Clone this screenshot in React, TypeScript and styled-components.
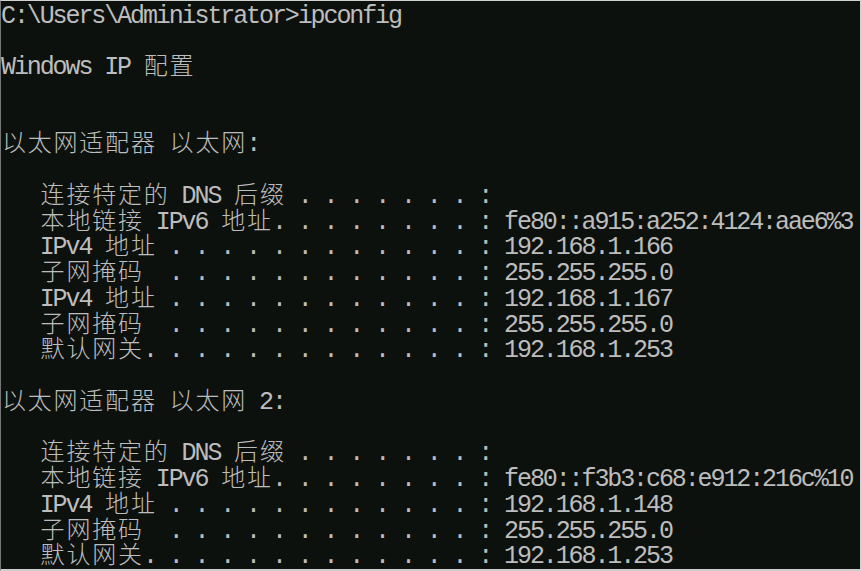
import React from "react";
import styled, { createGlobalStyle } from "styled-components";

const CELL = 12.9;
const ROW = 25.76;

const GlobalStyle = createGlobalStyle`
  html, body {
    margin: 0;
    padding: 0;
    background: #ffffff;
  }
  #root {
    width: 861px;
    height: 571px;
  }
`;

const Console = styled.div`
  box-sizing: border-box;
  width: 861px;
  height: 571px;
  overflow: hidden;
  background: #0d110d;
  border-top: 1px solid #d2d2d2;
  border-right: 1px solid #d2d2d2;
  border-bottom: 2px solid #cdcdcd;
  border-left: 1px solid #767676;
  padding-top: 2.5px;
  color: #bdbdbd;
`;

const Line = styled.div`
  height: ${ROW}px;
  line-height: ${ROW}px;
  white-space: pre;
  font-family: "Liberation Mono", "DejaVu Sans Mono", monospace;
  font-size: 25px;
`;

const Half = styled.span`
  font-family: "Liberation Mono", "DejaVu Sans Mono", monospace;
  font-size: 25px;
  letter-spacing: ${CELL - 25 * 0.60009765625}px;
`;

const Wide = styled.span`
  font-family: "Noto Sans CJK SC", "Noto Sans CJK JP", sans-serif;
  font-size: 24px;
  font-weight: 300;
  line-height: 0;
  letter-spacing: ${CELL * 2 - 24}px;
  padding-left: ${(CELL * 2 - 24) / 2}px;
  margin-right: -${(CELL * 2 - 24) / 2}px;
`;

const lines: string[] = [
  "C:\\Users\\Administrator>ipconfig",
  "",
  "Windows IP 配置",
  "",
  "",
  "以太网适配器 以太网:",
  "",
  "   连接特定的 DNS 后缀 . . . . . . . :",
  "   本地链接 IPv6 地址. . . . . . . . : fe80::a915:a252:4124:aae6%3",
  "   IPv4 地址 . . . . . . . . . . . . : 192.168.1.166",
  "   子网掩码  . . . . . . . . . . . . : 255.255.255.0",
  "   IPv4 地址 . . . . . . . . . . . . : 192.168.1.167",
  "   子网掩码  . . . . . . . . . . . . : 255.255.255.0",
  "   默认网关. . . . . . . . . . . . . : 192.168.1.253",
  "",
  "以太网适配器 以太网 2:",
  "",
  "   连接特定的 DNS 后缀 . . . . . . . :",
  "   本地链接 IPv6 地址. . . . . . . . : fe80::f3b3:c68:e912:216c%10",
  "   IPv4 地址 . . . . . . . . . . . . : 192.168.1.148",
  "   子网掩码  . . . . . . . . . . . . : 255.255.255.0",
  "   默认网关. . . . . . . . . . . . . : 192.168.1.253",
];

const CJK = /([\u2E80-\uFFEF]+)/;

function ConsoleLine({ text }: { text: string }) {
  const parts = text.split(CJK).filter((p) => p.length > 0);
  return (
    <Line>
      {parts.map((p, i) =>
        CJK.test(p) ? <Wide key={i}>{p}</Wide> : <Half key={i}>{p}</Half>
      )}
    </Line>
  );
}

export default function App() {
  return (
    <>
      <GlobalStyle />
      <Console>
        {lines.map((l, i) => (
          <ConsoleLine key={i} text={l} />
        ))}
      </Console>
    </>
  );
}
